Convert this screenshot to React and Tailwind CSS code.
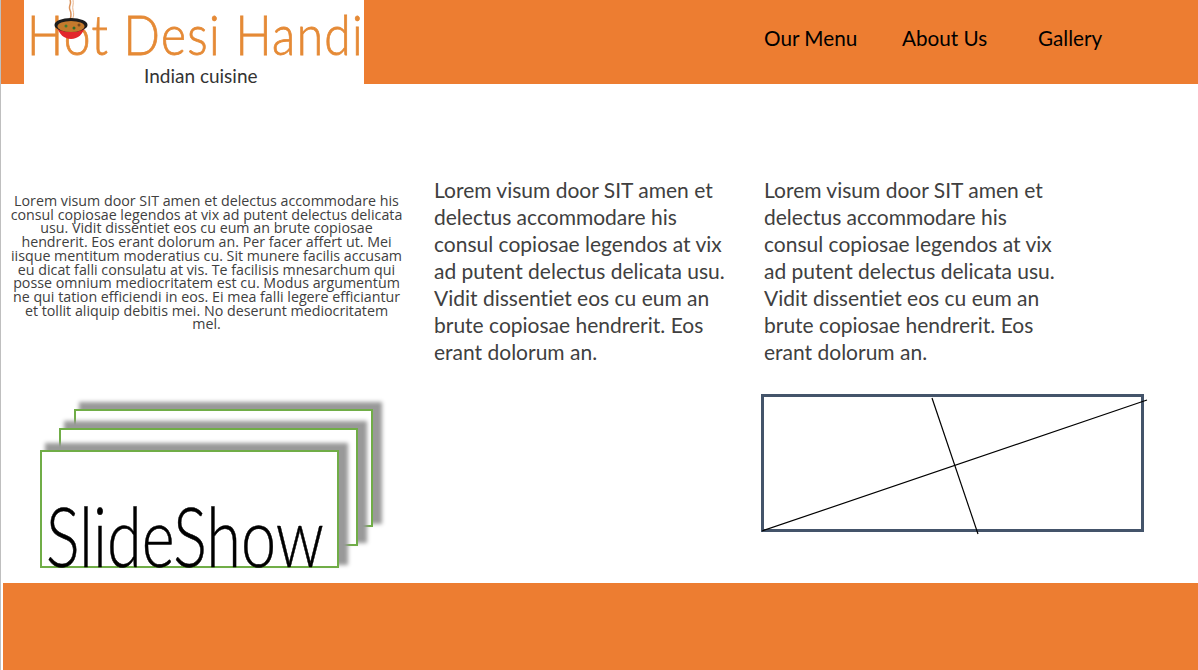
import React from 'react';

const navItems = [
    { label: 'Our Menu', className: 'w-[138px]' },
    { label: 'About Us', className: 'w-[136px]' },
    { label: 'Gallery', className: '' },
];

const paragraph = (
    <>
        Lorem visum door SIT amen et<br />
        delectus accommodare his<br />
        consul copiosae legendos at vix<br />
        ad putent delectus delicata usu.<br />
        Vidit dissentiet eos cu eum an<br />
        brute copiosae hendrerit. Eos<br />
        erant dolorum an.
    </>
);

const Bowl = () => (
    <svg className="absolute left-[30px] top-0" width="34" height="40" viewBox="0 0 34 40" fill="none">
        <path d="M16 0c2 4-2 6 0 10s1 6 0 10" stroke="#d9915a" strokeWidth="1.5" />
        <path d="M19 0c1 4-1 6 0 10s1 6-1 10" stroke="#eab48a" strokeWidth="1" />
        <path d="M3 27c2 7 7 12 14 12s12-5 14-12z" fill="#e3262b" />
        <ellipse cx="17" cy="25" rx="16.5" ry="7" fill="#1c1c1c" />
        <ellipse cx="17" cy="26.5" rx="13.5" ry="5.5" fill="#c47a2c" />
        <circle cx="12" cy="26" r="1.5" fill="#3f7d32" />
        <circle cx="20" cy="28" r="1.5" fill="#2f6b2a" />
        <circle cx="25" cy="25" r="1.5" fill="#7a4a1e" />
    </svg>
);

const Logo = () => (
    <div className="relative w-[340px] h-full bg-white">
        <div className="absolute left-[3px] top-[-1px] origin-left scale-x-[0.855] whitespace-nowrap text-[56px] leading-[70px] font-light tracking-[1.6px] text-[#e58a36] [-webkit-text-stroke:0.8px_#e58a36]">
            Hot Desi Handi
        </div>
        <Bowl />
        <div className="absolute left-[120px] top-[65px] whitespace-nowrap text-[19px] leading-[22px] text-[#333]">
            Indian cuisine
        </div>
    </div>
);

const cardClass = 'absolute w-[299px] h-[118px] bg-white border-2 border-[#70ad47] shadow-[7px_-5px_4px_2px_#999]';

const SlideStack = () => (
    <div className="relative h-[159px] mt-[78px]">
        <div className={`${cardClass} left-[73px] top-0`} />
        <div className={`${cardClass} left-[58px] top-[19px]`} />
        <div className={`${cardClass} left-[39px] top-[41px]`}>
            <span className="absolute left-[4px] top-[61px] origin-bottom scale-y-[1.3] whitespace-nowrap text-[63px] leading-[64px] font-light text-black [-webkit-text-stroke:0.4px_black]">
                SlideShow
            </span>
        </div>
    </div>
);

const CrossedBox = () => (
    <div className="relative mt-[29px] ml-[-3px] w-[383px] h-[138px] border-[3px] border-[#44546a]">
        <svg className="absolute left-[-3px] top-[-3px] overflow-visible" width="383" height="138" fill="none">
            <line x1="1" y1="137" x2="386" y2="6" stroke="black" strokeWidth="1.2" />
            <line x1="171" y1="4" x2="217" y2="140" stroke="black" strokeWidth="1.2" />
        </svg>
    </div>
);

const App = () => {
    return (
        <div className="w-[1198px] h-[670px] overflow-hidden bg-white border-l border-[#bfbfbf] font-['Lato','Carlito',sans-serif] [font-variant-ligatures:none]">
            {/* Header */}
            <header className="flex items-start h-[84px] bg-[#ed7d31]">
                <div className="w-[23px]" />
                <Logo />
                <nav className="flex ml-[400px] pt-[24px] text-[20.7px] leading-[28px] text-black">
                    {navItems.map(item => (
                        <a key={item.label} className={item.className}>{item.label}</a>
                    ))}
                </nav>
            </header>

            {/* Content */}
            <main className="flex h-[499px]">
                <div className="w-[433px]">
                    <p className="ml-[9px] mt-[110px] w-[393px] text-center text-[14.25px] leading-[13.7px] text-[#404040] font-['Open_Sans',sans-serif]">
                        Lorem visum door SIT amen et delectus accommodare his<br />
                        consul copiosae legendos at vix ad putent delectus delicata<br />
                        usu. Vidit dissentiet eos cu eum an brute copiosae<br />
                        hendrerit. Eos erant dolorum an. Per facer affert ut. Mei<br />
                        iisque mentitum moderatius cu. Sit munere facilis accusam<br />
                        eu dicat falli consulatu at vis. Te facilisis mnesarchum qui<br />
                        posse omnium mediocritatem est cu. Modus argumentum<br />
                        ne qui tation efficiendi in eos. Ei mea falli legere efficiantur<br />
                        et tollit aliquip debitis mei. No deserunt mediocritatem<br />
                        mel.
                    </p>
                    <SlideStack />
                </div>
                <div className="w-[330px] pt-[92px]">
                    <p className="text-[21px] leading-[27px] text-[#404040] whitespace-nowrap">{paragraph}</p>
                </div>
                <div className="pt-[92px]">
                    <p className="text-[21px] leading-[27px] text-[#404040] whitespace-nowrap">{paragraph}</p>
                    <CrossedBox />
                </div>
            </main>

            {/* Footer */}
            <footer className="ml-[2px] h-[87px] bg-[#ed7d31]" />
        </div>
    );
};

export default App;
